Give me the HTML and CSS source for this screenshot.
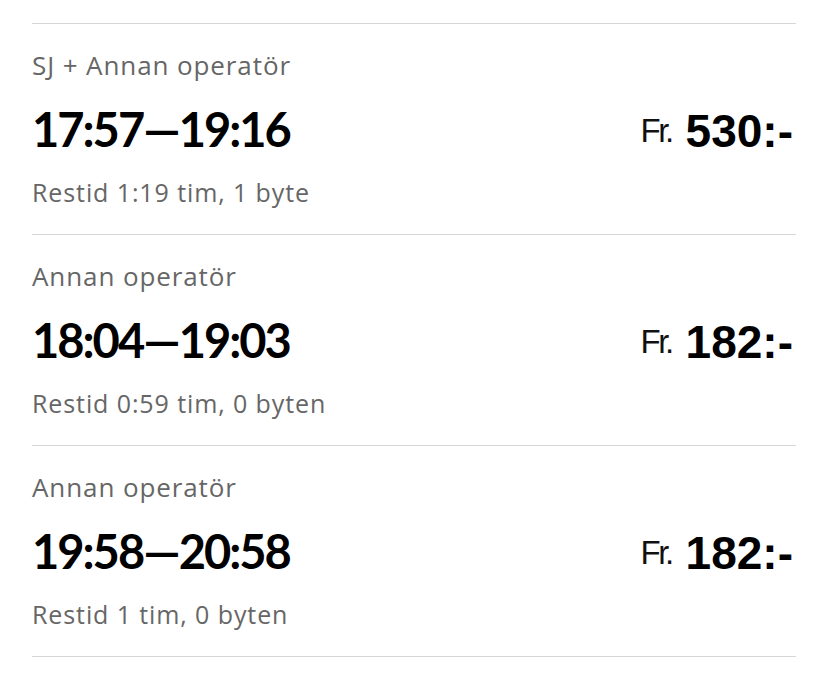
FILE: index.html
```html
<!DOCTYPE html>
<html lang="sv">
<head>
<meta charset="utf-8">
<title>Resor</title>
<link rel="stylesheet" href="styles.css">
</head>
<body>
<ul class="trips">
  <li class="trip">
    <div class="operator">SJ + Annan operatör</div>
    <div class="main">
      <span class="time">17:57—19:16</span>
      <span class="price"><span class="from">Fr.</span><span class="amount">530:-</span></span>
    </div>
    <div class="info">Restid 1:19 tim, 1 byte</div>
  </li>
  <li class="trip">
    <div class="operator">Annan operatör</div>
    <div class="main">
      <span class="time">18:04—19:03</span>
      <span class="price"><span class="from">Fr.</span><span class="amount">182:-</span></span>
    </div>
    <div class="info">Restid 0:59 tim, 0 byten</div>
  </li>
  <li class="trip">
    <div class="operator">Annan operatör</div>
    <div class="main">
      <span class="time">19:58—20:58</span>
      <span class="price"><span class="from">Fr.</span><span class="amount">182:-</span></span>
    </div>
    <div class="info">Restid 1 tim, 0 byten</div>
  </li>
</ul>
</body>
</html>
```
FILE: styles.css
```css
html, body {
  margin: 0;
  padding: 0;
  background: #ffffff;
}
body {
  font-family: "Open Sans", "Noto Sans", sans-serif;
  color: #000;
}
.trips {
  list-style: none;
  margin: 0;
  padding: 23px 32px 0 32px;
}
.trip {
  border-top: 1px solid #d6d6d6;
  padding: 25px 0 26px 0;
}
.trip:last-child {
  border-bottom: 1px solid #d6d6d6;
}
.operator {
  font-size: 26px;
  line-height: 32px;
  letter-spacing: 0.9px;
  color: #666666;
}
.main {
  margin-top: 20px;
  height: 56px;
  display: flex;
  justify-content: space-between;
  align-items: baseline;
}
.time {
  font-family: Lato, "Noto Sans", sans-serif;
  font-size: 47px;
  line-height: 56px;
  font-weight: 700;
  letter-spacing: -2px;
  color: #000;
}
.price {
  display: flex;
  align-items: baseline;
  gap: 14px;
  margin-right: 3px;
  font-family: "Liberation Sans", Arial, sans-serif;
  line-height: 56px;
}
.from {
  font-size: 33px;
  letter-spacing: -2.5px;
  color: #111;
  position: relative;
  top: -5px;
}
.amount {
  font-size: 46px;
  font-weight: 700;
  color: #000;
}
.info {
  margin-top: 19px;
  font-size: 25px;
  line-height: 32px;
  letter-spacing: 0.9px;
  color: #666666;
}
```
